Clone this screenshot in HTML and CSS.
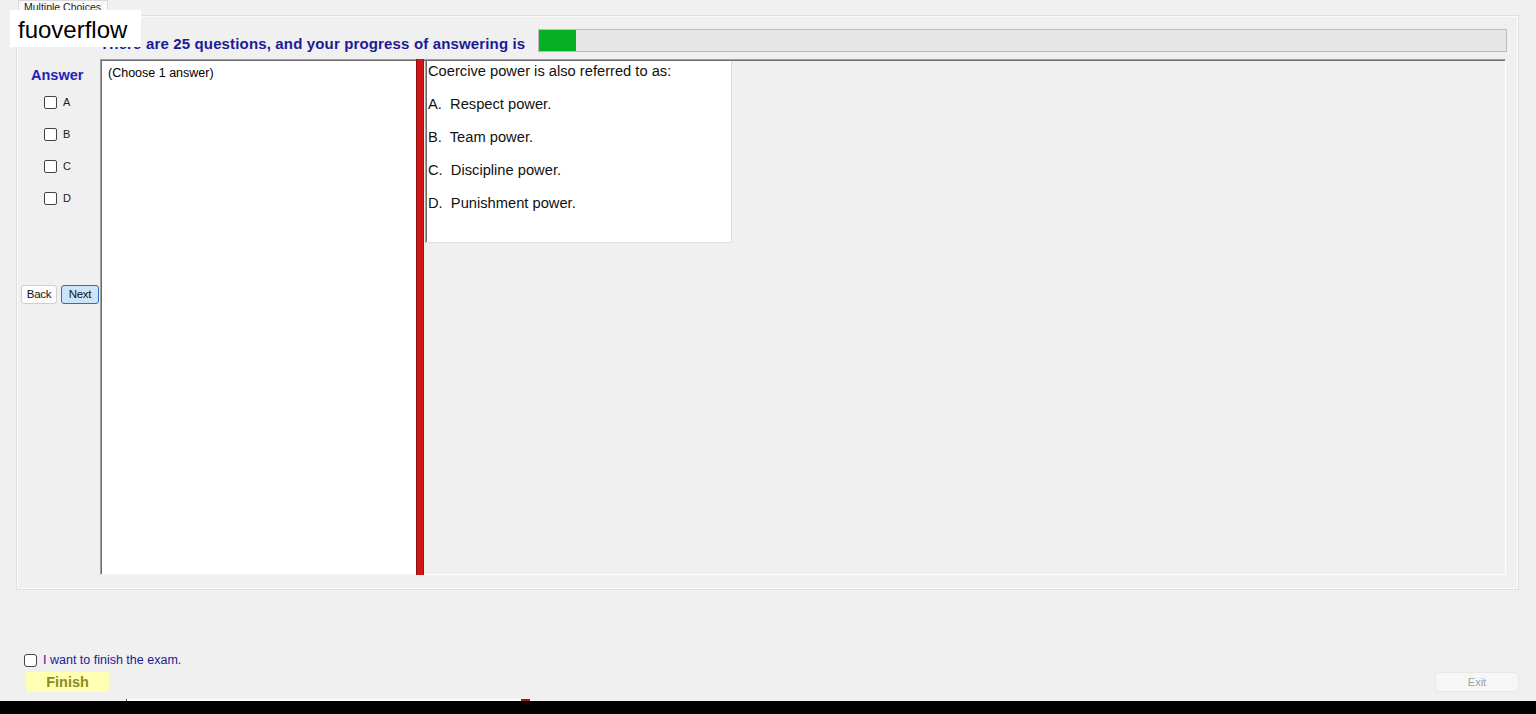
FILE: index.html
```html
<!DOCTYPE html>
<html>

<head>
  <meta charset="UTF-8">
  <title>Multiple Choices</title>
  <link rel="stylesheet" href="styles.css">
</head>

<body>
  <div class="window">
    <div class="tabs">
      <span class="tab">Multiple Choices</span>
    </div>
    <div class="tab-page">
      <div class="header">
        <div class="heading">There are 25 questions, and your progress of answering is</div>
        <div class="progress">
          <div class="progress-fill"></div>
        </div>
      </div>
      <div class="answer-col">
        <div class="answer-title">Answer</div>
        <div class="answer-row"><span class="check"></span><span class="answer-label">A</span></div>
        <div class="answer-row"><span class="check"></span><span class="answer-label">B</span></div>
        <div class="answer-row"><span class="check"></span><span class="answer-label">C</span></div>
        <div class="answer-row"><span class="check"></span><span class="answer-label">D</span></div>
        <div class="nav-buttons">
          <span class="nav-button">Back</span>
          <span class="nav-button nav-button-active">Next</span>
        </div>
      </div>
      <div class="panel">
        <div class="choose-box">(Choose 1 answer)</div>
        <div class="splitter"></div>
        <div class="question-area">
          <div class="question-box">
            <p>Coercive power is also referred to as:</p>
            <p>A.  Respect power.</p>
            <p>B.  Team power.</p>
            <p>C.  Discipline power.</p>
            <p>D.  Punishment power.</p>
          </div>
        </div>
      </div>
    </div>
    <div class="footer">
      <div class="finish-col">
        <div class="finish-row"><span class="check check-round"></span><span class="finish-label">I want to finish the exam.</span></div>
        <span class="finish-button">Finish</span>
      </div>
      <span class="exit-button">Exit</span>
    </div>
    <div class="strip">
      <div class="peek"></div>
      <div class="peek-end"></div>
    </div>
    <div class="taskbar"></div>
  </div>
  <div class="watermark">fuoverflow</div>
</body>

</html>
```

FILE: styles.css
```css
html {
  height: 100%;
  overflow: hidden;
}

body {
  font-family: "Liberation Sans", Arial, sans-serif;
  height: 100%;
  margin: 0;
  overflow: hidden;
  background-color: #f0f0f0;
  color: #000;
  position: relative;
}

.window {
  height: 714px;
  display: flex;
  flex-direction: column;
}

.tabs {
  height: 15px;
  padding-left: 18px;
  display: flex;
}

.tab {
  width: 90px;
  height: 15px;
  box-sizing: border-box;
  border: 1px solid #d9d9d9;
  border-bottom: none;
  background-color: #f9f9f9;
  font-size: 10.5px;
  line-height: 13px;
  padding-left: 5px;
  color: #222;
  white-space: nowrap;
}

.tab-page {
  margin-left: 16px;
  width: 1503px;
  height: 575px;
  box-sizing: border-box;
  border: 1px solid #e0e0e0;
  box-shadow: inset 1px 1px #fbfbfb, inset -1px -1px #fbfbfb;
  padding: 13px 0 0 4px;
  display: grid;
  grid-template-columns: 79px 1406px;
  grid-template-rows: 23px 516px;
  row-gap: 7px;
}

.header {
  grid-column: 2;
  grid-row: 1;
  display: flex;
  align-items: center;
}

.heading {
  width: 438px;
  font-size: 15px;
  font-weight: bold;
  letter-spacing: 0.15px;
  color: #1b1b99;
  white-space: nowrap;
  padding-top: 6px;
}

.progress {
  flex: 1;
  height: 23px;
  margin-right: -1px;
  box-sizing: border-box;
  border: 1px solid #bcbcbc;
  background-color: #e6e6e6;
}

.progress-fill {
  width: 37px;
  height: 100%;
  background-color: #06b025;
}

.answer-col {
  grid-column: 1;
  grid-row: 2;
}

.answer-title {
  margin-top: 8px;
  padding-left: 10px;
  line-height: 16px;
  font-size: 14.5px;
  font-weight: bold;
  color: #1f22b5;
}

.answer-row {
  height: 32px;
  display: flex;
  align-items: center;
  gap: 6px;
  padding-left: 23px;
}

.answer-title + .answer-row {
  margin-top: 3px;
}

.check {
  width: 13px;
  height: 13px;
  box-sizing: border-box;
  border: 1px solid #444;
  border-radius: 2px;
  background-color: #fff;
}

.check-round {
  border-radius: 3px;
}

.answer-label {
  font-size: 11px;
  color: #222;
}

.nav-buttons {
  margin-top: 71px;
  display: flex;
  gap: 4px;
}

.nav-button {
  width: 36px;
  height: 19px;
  box-sizing: border-box;
  border: 1px solid #d0d0d0;
  border-radius: 3px;
  background-color: #fdfdfd;
  font-size: 11.5px;
  line-height: 17px;
  text-align: center;
  letter-spacing: -0.3px;
  color: #111;
}

.nav-button-active {
  width: 38px;
  border-color: #2d72b0;
  background-color: #cce4f7;
}

.panel {
  grid-column: 2;
  grid-row: 2;
  display: flex;
}

.choose-box {
  width: 316px;
  box-sizing: border-box;
  border-top: 1px solid #a0a0a0;
  border-left: 1px solid #a0a0a0;
  border-bottom: 1px solid #f4f4f4;
  box-shadow: inset 1px 1px #6d6d6d;
  background-color: #fff;
  padding: 6px 7px;
  font-size: 12.5px;
  line-height: 14px;
}

.splitter {
  width: 8px;
  box-sizing: border-box;
  background-color: #d01616;
  border-left: 1px solid #8e1010;
  border-right: 1px solid #9a1414;
}

.question-area {
  flex: 1;
  box-sizing: border-box;
  border-top: 1px solid #a0a0a0;
  border-right: 1px solid #fff;
  border-bottom: 1px solid #fff;
  box-shadow: inset 0 1px #6d6d6d;
  padding: 1px 0 0 1px;
}

.question-box {
  width: 307px;
  height: 182px;
  box-sizing: border-box;
  border-left: 1px solid #a0a0a0;
  border-right: 1px solid #dcdcdc;
  border-bottom: 1px solid #dcdcdc;
  box-shadow: inset 1px 0 #6d6d6d;
  background-color: #fff;
  padding: 2px 0 0 2px;
  font-size: 14.7px;
  color: #111;
}

.question-box p {
  margin: 0 0 17px;
  line-height: 16px;
  white-space: pre;
}

.footer {
  height: 109px;
  box-sizing: border-box;
  padding: 0 17px 7px 24px;
  display: flex;
  justify-content: space-between;
  align-items: flex-end;
}

.finish-row {
  height: 16px;
  display: flex;
  align-items: center;
  gap: 6px;
}

.finish-label {
  font-size: 12.5px;
  color: #1b1b96;
}

.finish-button {
  display: block;
  width: 83px;
  height: 20px;
  margin: 4px 0 0 2px;
  background-color: #ffffb4;
  font-size: 14.5px;
  font-weight: bold;
  line-height: 21px;
  text-align: center;
  color: #8c8c1e;
}

.exit-button {
  width: 84px;
  height: 20px;
  box-sizing: border-box;
  border: 1px solid #e8e8e8;
  border-radius: 3px;
  background-color: #f6f6f6;
  font-size: 11px;
  line-height: 18px;
  text-align: center;
  color: #a0a0a0;
}

.strip {
  height: 2px;
  padding-left: 126px;
  display: flex;
}

.peek {
  width: 395px;
  box-sizing: border-box;
  border-left: 1px solid #555;
  background-color: #fff;
}

.peek-end {
  width: 9px;
  background-color: #a11a1a;
}

.taskbar {
  flex: 1;
  background-color: #000;
}

.watermark {
  position: absolute;
  left: 10px;
  top: 10px;
  width: 131px;
  height: 37px;
  box-sizing: border-box;
  padding: 3px 0 0 8px;
  background-color: #fff;
  font-size: 24px;
  line-height: 34px;
  color: #000;
}
```
